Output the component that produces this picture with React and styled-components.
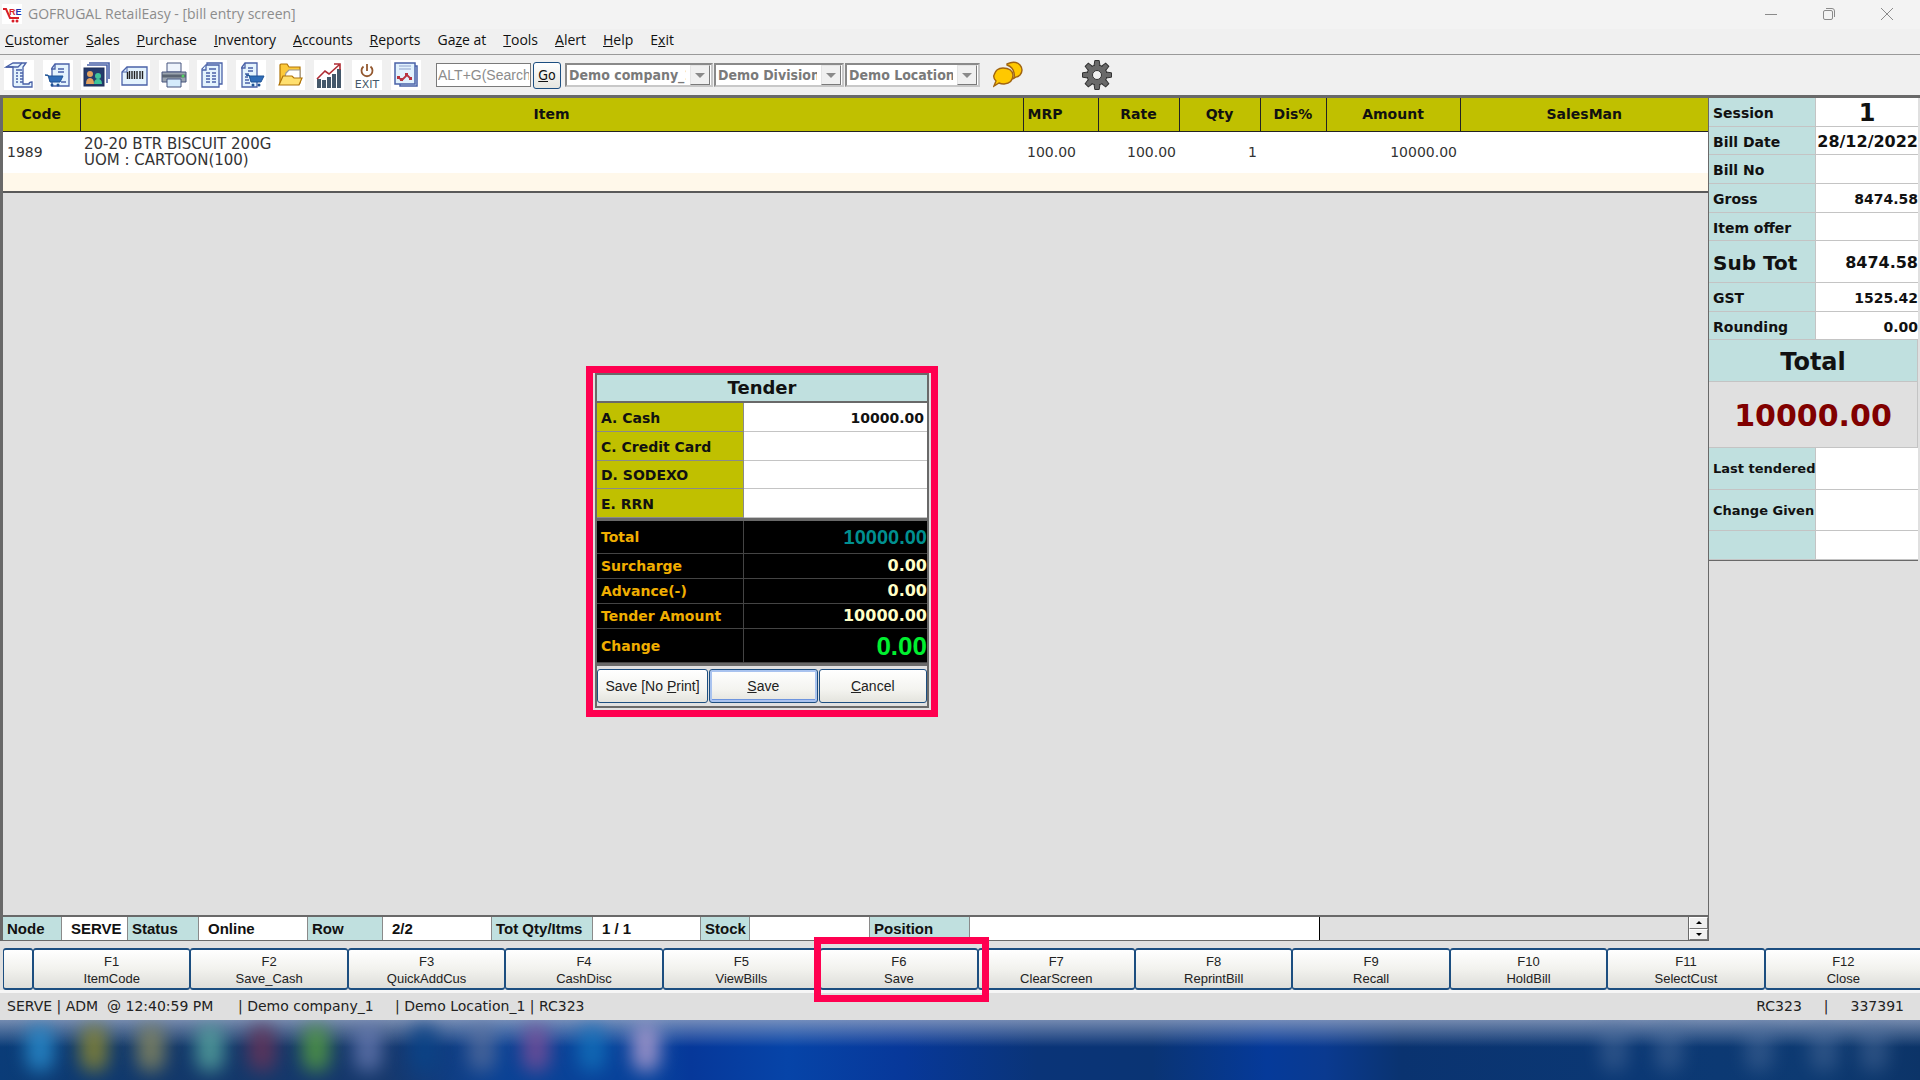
import React from 'react';
import styled, { createGlobalStyle, css } from 'styled-components';

const VERDANA = `Verdana, "DejaVu Sans", sans-serif`;
const TAHOMA = `Tahoma, "DejaVu Sans Condensed", "DejaVu Sans", sans-serif`;
const SEGOE = `"Segoe UI", "Open Sans", "Noto Sans", sans-serif`;
const SYSTEM = `"Microsoft Sans Serif", "Liberation Sans", sans-serif`;

const OLIVE = '#c0c000';
const TEAL = '#c0e0df';
const GREY = '#e0e0e0';
const DARK = '#696969';
const PINK = '#ff0050';
const NAVY = '#1c4e80';

const Global = createGlobalStyle`
  * { box-sizing: border-box; }
  html, body, #root { height: 100%; }
  body { margin: 0; background: ${GREY}; overflow: hidden; }
  button, input, select { margin: 0; font: inherit; }
`;

const Desktop = styled.div`
  display: flex;
  flex-direction: column;
  min-height: 100vh;
  font: 14px/16px ${VERDANA};
  color: #111;
`;

/* ---------- title bar ---------- */
const TitleBar = styled.header`
  display: flex;
  align-items: center;
  height: 29px;
  padding: 0 4px 1px 2px;
  background: #f3f3f3;
  font: 14px/20px ${SEGOE};
  color: #8c8c8c;
`;
const Title = styled.h1`
  flex: 1;
  margin: 0 0 0 6px;
  font: inherit;
`;
const Logo = styled.svg`
  width: 20px;
  height: 20px;
  background: #fff;
`;
const WindowButton = styled.button`
  display: grid;
  place-items: center;
  width: 58px;
  height: 28px;
  padding: 0;
  border: 0;
  background: none;
`;

/* ---------- menu ---------- */
const MenuBar = styled.nav`
  display: flex;
  align-items: center;
  gap: 17px;
  height: 25px;
  padding: 0 5px 3px;
  background: #f0f0f0;
  font: 14px/20px ${SEGOE};
`;
const MenuItem = styled.a`
  color: #111;
  text-decoration: none;
`;

/* ---------- toolbar ---------- */
const ToolBar = styled.div`
  display: flex;
  align-items: center;
  height: 41px;
  padding: 0 4px;
  border-top: 1px solid #9a9a9a;
  background: #f0f0f0;
`;
const IconGroup = styled.div`
  display: flex;
  justify-content: space-between;
  width: 417px;
  margin-right: 15px;
`;
const IconButton = styled.button`
  flex: none;
  width: 30px;
  height: 30px;
  padding: 0;
  border: 0;
  background: ${(p) => (p.$plain ? 'none' : '#fff')};
  margin-left: ${(p) => p.$space || 0}px;
  svg { display: block; width: 30px; height: 30px; }
`;
const SearchBox = styled.input`
  width: 95px;
  height: 24px;
  padding: 0 1px;
  border: 1px solid #7a7a7a;
  background: #fff;
  font: 14px/20px ${SYSTEM};
  &::placeholder { color: #8c8c8c; opacity: 1; }
`;
const GoButton = styled.button`
  width: 28px;
  height: 27px;
  margin: 0 4px 0 2px;
  padding: 0;
  border: 1px solid ${NAVY};
  border-radius: 3px;
  background: linear-gradient(#fff, #e6e6e0);
  font: 14px/20px ${TAHOMA};
  color: #111;
`;
const Combo = styled.label`
  display: flex;
  width: ${(p) => p.$width}px;
  height: 24px;
  margin-right: 1px;
  padding: 0 1px 0 0;
  border: 2px solid;
  border-color: #8a8a8a #c8c8c8 #c8c8c8 #8a8a8a;
  background: #fff;
`;
const ComboSelect = styled.select`
  flex: 1;
  min-width: 0;
  padding: 0 4px 0 2px;
  border: 0;
  appearance: none;
  background: #fff;
  font: bold 14px/20px ${TAHOMA};
  color: #7a7a7a;
  opacity: 1;
`;
const ComboArrow = styled.span`
  display: grid;
  place-items: center;
  flex: none;
  width: 20px;
  border: 1px solid;
  border-color: #e4e4e4 #7a7a7a #7a7a7a #e4e4e4;
  background: #f0f0f0;
`;

/* ---------- work area ---------- */
const Work = styled.main`
  display: flex;
  flex: 1;
  position: relative;
  border-top: 3px solid ${DARK};
  background: ${GREY};
  padding-right: 2px;
`;
const Left = styled.section`
  display: flex;
  flex: 1;
  flex-direction: column;
  border: solid ${DARK};
  border-width: 0 1px 0 3px;
`;
const BillTable = styled.table`
  width: 100%;
  border-collapse: collapse;
  table-layout: fixed;
  border-bottom: 2px solid #5a5a5a;
  background: #fff;
`;
const Col = styled.col`
  width: ${(p) => (p.$width ? `${p.$width}px` : 'auto')};
`;
const Th = styled.th`
  height: 33px;
  padding: 0 4px;
  border-right: 1px solid #222;
  border-bottom: 1px solid #222;
  background: ${OLIVE};
  font-size: 14px;
  text-align: ${(p) => (p.$left ? 'left' : 'center')};
  &:last-child { border-right: 0; }
`;
const Td = styled.td`
  height: 42px;
  padding: 0 3px 0 4px;
  font-size: ${(p) => (p.$name ? 15 : 14)}px;
  line-height: 16px;
  color: #333;
  text-align: ${(p) => (p.$right ? 'right' : 'left')};
`;
const EmptyRow = styled.td`
  height: 19px;
  padding: 0;
  background: #fff8ea;
`;

/* ---------- totals panel ---------- */
const Totals = styled.dl`
  display: grid;
  grid-template-columns: 107px 1fr;
  grid-template-rows: repeat(5, 29fr) 42fr repeat(2, 29fr) 42fr 67fr 42fr 42fr 29fr;
  flex: none;
  width: 209px;
  height: 463px;
  margin: 0;
  border-bottom: 1px solid ${DARK};
  font-weight: bold;
`;
const Label = styled.dt`
  display: flex;
  align-items: center;
  min-height: 0;
  padding: 2px 0 0 4px;
  border: solid #c4c4c4;
  border-width: 0 1px 1px 0;
  background: ${TEAL};
  font-size: ${(p) => p.$size || 14}px;
  line-height: 24px;
  white-space: nowrap;
`;
const Value = styled.dd`
  display: flex;
  align-items: center;
  justify-content: ${(p) => (p.$center ? 'center' : 'flex-end')};
  min-height: 0;
  min-width: 0;
  margin: 0;
  padding-top: 2px;
  border-bottom: 1px solid #c4c4c4;
  background: #fff;
  font-size: ${(p) => p.$size || 14}px;
`;
const GrandLabel = styled(Label)`
  grid-column: 1 / -1;
  justify-content: center;
  padding-left: 0;
`;
const GrandValue = styled(Value)`
  grid-column: 1 / -1;
  border-right: 1px solid #c4c4c4;
  background: ${GREY};
  color: #800000;
`;

/* ---------- tender dialog ---------- */
const Dialog = styled.section`
  position: absolute;
  top: 268px;
  left: 586px;
  width: 352px;
  padding: 0 2px 2px;
  border: 7px solid ${PINK};
  background: ${GREY};
`;
const DialogBody = styled.form`
  display: flex;
  flex-direction: column;
  border: 2px solid ${DARK};
`;
const DialogTitle = styled.h2`
  margin: 0;
  border-bottom: 2px solid ${DARK};
  background: ${TEAL};
  font-size: 18px;
  line-height: 26px;
  text-align: center;
`;
const Rows = styled.div`
  display: grid;
  grid-template-rows: ${(p) => p.$rows};
  height: ${(p) => p.$height}px;
  border-bottom: 3px solid ${DARK};
`;
const Line = styled.div`
  display: grid;
  grid-template-columns: 147px 1fr;
  min-height: 0;
`;
const PayLabel = styled.label`
  display: flex;
  align-items: center;
  padding: 2px 0 0 4px;
  border: solid #8a8a8a;
  border-width: 0 1px 1px 0;
  background: ${OLIVE};
  font-size: 14px;
  font-weight: bold;
`;
const PayInput = styled.input`
  min-width: 0;
  padding: 2px 3px 0 0;
  border: 0;
  border-bottom: 1px solid #c4c4c4;
  background: #fff;
  font: bold 14px/16px ${VERDANA};
  color: #111;
  text-align: right;
`;
const SumLabel = styled.label`
  display: flex;
  align-items: center;
  padding-left: 4px;
  border: solid #444;
  border-width: 0 1px 1px 0;
  background: #000;
  color: #f0ae00;
  font: bold 14px/16px ${VERDANA};
`;
const SumValue = styled.output`
  display: flex;
  align-items: center;
  justify-content: flex-end;
  border-bottom: 1px solid #444;
  background: #000;
  color: ${(p) => p.$color || '#ffffc8'};
  font-size: ${(p) => p.$size || 16}px;
  font-weight: bold;
  font-family: ${(p) => p.$family || VERDANA};
`;
const DialogActions = styled.div`
  display: grid;
  grid-template-columns: 111px 1fr 1fr;
  gap: 1px;
  padding: 3px 0;
`;
const XpButton = styled.button`
  height: 34px;
  padding: 0;
  border: 1px solid ${NAVY};
  border-radius: 3px;
  background: linear-gradient(#fff, #f4f4f0 60%, #e4e4de);
  font: 14px/16px ${SYSTEM};
  color: #222;
  ${(p) => p.$focus && css`box-shadow: inset 0 0 0 2px #a9c3ef, inset 0 -3px 0 #6d94de;`}
`;

/* ---------- bottom strip ---------- */
const InfoStrip = styled.div`
  display: flex;
  height: 26px;
  margin-top: auto;
  border: solid ${DARK};
  border-width: 2px 0 1px;
  font: bold 15px/20px ${SYSTEM};
`;
const InfoLabel = styled.span`
  display: flex;
  align-items: center;
  width: ${(p) => p.$width}px;
  padding: 1px 0 0 4px;
  border-right: 1px solid #8a8a8a;
  background: ${TEAL};
  white-space: nowrap;
`;
const InfoValue = styled.span`
  display: flex;
  align-items: center;
  width: ${(p) => p.$width}px;
  padding: 1px 0 0 9px;
  border-right: 1px solid ${(p) => (p.$end ? '#000' : '#8a8a8a')};
  background: #fff;
`;
const Spinner = styled.div`
  display: flex;
  flex-direction: column;
  width: 20px;
  margin-left: auto;
  border-left: 1px solid ${DARK};
`;
const SpinButton = styled.button`
  display: grid;
  place-items: center;
  flex: 1;
  min-height: 0;
  padding: 0;
  border: 1px solid;
  border-color: #fff #777 #777 #fff;
  background: #f0f0f0;
`;
const KeyBar = styled.div`
  display: flex;
  height: 52px;
  padding: 7px 0 0 3px;
  margin-right: -2px;
  border-bottom: 3px solid #f6f6f6;
`;
const KeyButton = styled.button`
  position: relative;
  flex: 1;
  height: 42px;
  padding: 2px 0 0;
  border: solid ${NAVY};
  border-width: 2px 1px;
  border-radius: 3px;
  background: linear-gradient(#fff, #f2f2ee 50%, #dededa);
  font: 13px/17px ${SYSTEM};
  color: #222;
  ${(p) => p.$blank && css`flex: 0 0 30px;`}
  ${(p) => p.$marked && css`
    z-index: 1;
    &::after {
      content: '';
      position: absolute;
      inset: -13px -12px -14px -7px;
      border: 7px solid ${PINK};
    }
  `}
`;
const KeyText = styled.span`
  display: block;
`;
const StatusBar = styled.footer`
  display: grid;
  grid-template-columns: 231px 157px 1fr auto;
  align-items: center;
  height: 27px;
  padding: 0 16px 1px 7px;
  background: #dfdfdf;
  font: 14px/16px ${VERDANA};
  color: #222;
  white-space: pre;
`;
const StatusRight = styled.span`
  display: flex;
  gap: 22px;
`;

/* ---------- task bar ---------- */
const TaskBar = styled.div`
  position: relative;
  height: 60px;
  overflow: hidden;
  background:
    linear-gradient(rgba(150, 165, 195, 0.75), rgba(150, 165, 195, 0) 45%),
    linear-gradient(90deg, #0a3c78, #12386a 8%, #16386c 20%, #0b4294 26%, #07429c 34%, #06389a 36%, #0644a8 41%,
      #07389a 47%, #0a3478 54%, #0a3474 60%, #053a9a 66%, #0a3a90 69%, #0a3370 73%, #0b3874 85%, #0d3a72 94%, #0c3468);
`;
const Blob = styled.span`
  position: absolute;
  top: 4px;
  width: 28px;
  height: 48px;
  border-radius: 14px;
  filter: blur(9px);
  opacity: ${(p) => p.$opacity || 0.8};
  background: ${(p) => p.$color};
`;

/* ---------- drawings ---------- */
const blue = '#4a62a8';
const page = '#e4f3fd';

const Cart = ({ x, y }) => (
  <g transform={`translate(${x} ${y})`}>
    <path d="M0 1h3l2 7h10l3-6H4z" fill="#2f6db8" stroke="#1f5496" />
    <circle cx="7" cy="11" r="1.5" fill="#1f5496" />
    <circle cx="13" cy="11" r="1.5" fill="#1f5496" />
  </g>
);

const icons = {
  Receipt: (
    <g fill={page} stroke={blue} strokeWidth="1.3">
      <path d="M9 3h13l-3 4v17h6q0-2 3-2v5H11q-2 0-2-2V7H2z" />
      <path d="M2 7h12l4-4" fill="none" />
      <path d="M12 10h6M12 13h2m2 0h3M12 16h2m2 0h3M12 19h2m2 0h3M12 22h2m2 0h3" />
    </g>
  ),
  'Sales cart': (
    <g>
      <path d="M12 4h14v22H9V8z" fill={page} stroke={blue} strokeWidth="1.3" />
      <path d="M12 4v5H8M15 9h6M15 12h6M18 22h5" fill="none" stroke={blue} strokeWidth="1.3" />
      <g transform="translate(2 14)"><Cart x={0} y={0} /></g>
    </g>
  ),
  Customers: (
    <g>
      <path d="M8 3h20v16M6 5h20v18" fill="none" stroke={blue} strokeWidth="1.6" />
      <rect x="3" y="8" width="20" height="18" fill="#243a6c" stroke="#1e2f58" />
      <circle cx="9" cy="14" r="3" fill="#e2a260" />
      <path d="M5 24q0-6 4-6t4 6z" fill="#e2a260" />
      <circle cx="17" cy="16" r="3" fill="#3fc49a" />
      <path d="M13 24q0-5 4-5t4 5z" fill="#3fc49a" />
    </g>
  ),
  Barcode: (
    <g>
      <path d="M7 7h20v18H2V12z" fill={page} stroke={blue} strokeWidth="1.3" />
      <path d="M7 7v5H2" fill="none" stroke={blue} />
      <path d="M7.500 12v7M9.500 11v8M12 11v8M14.500 11v8M17 11v8M20 11v8M22.500 11v8" stroke="#222" strokeWidth="1.4" />
    </g>
  ),
  Print: (
    <g stroke="#46557f">
      <path d="M8 3h14v9H8z" fill="#eef4fc" />
      <path d="M3 12h24v10H3z" fill="#9aa3ad" />
      <path d="M3 16h24" strokeWidth="3" stroke="#5a6472" />
      <path d="M8 19h14v8H8z" fill="#d4ebfb" />
      <circle cx="24" cy="16" r="1.500" fill="#4fd060" stroke="none" />
    </g>
  ),
  Report: (
    <g fill={page} stroke={blue} strokeWidth="1.3">
      <path d="M10 3h15v21H10z" />
      <path d="M9 5h13v22H5V9z" />
      <path d="M9 5v5H5M12 9h7M9 13h4m2 0h4M9 16h4m2 0h4M9 19h4m2 0h4M9 22h4m2 0h4" />
    </g>
  ),
  'Purchase cart': (
    <g>
      <path d="M9 3h12v24H6V7z" fill={page} stroke={blue} strokeWidth="1.3" />
      <path d="M9 3v5H5M12 8h5M12 11h5M9 14h4M9 17h3M9 20h4M9 23h5" fill="none" stroke={blue} strokeWidth="1.3" />
      <Cart x={10} y={14} />
    </g>
  ),
  Folder: (
    <g stroke="#b07408" strokeWidth="1.2">
      <path d="M5 24V5q0-1 1-1h6l2 3h11v16z" fill="#fcc93a" />
      <path d="M11 13l3-3h11v10H9z" fill="#fff" stroke="#9a9a9a" />
      <path d="M8 16h9l2 2h8l-3 7H4z" fill="#ffe070" />
    </g>
  ),
  Chart: (
    <g>
      <path d="M5 28v-9M10 28v-8M15 28V17M20 28V14M25 28V9" stroke="#44586a" strokeWidth="4" />
      <path d="M3 19l8-8 4 3 10-9M20 4h6v6" fill="none" stroke="#b02c34" strokeWidth="1.600" />
    </g>
  ),
  Exit: (
    <g>
      <path d="M11.500 6.500a5.500 5.500 0 1 0 7 0M15 4v7" fill="none" stroke="#93582f" strokeWidth="1.800" />
      <text x="15" y="28" textAnchor="middle" fontFamily="DejaVu Sans, sans-serif" fontSize="11" fill="#44586a">EXIT</text>
    </g>
  ),
  Analysis: (
    <g>
      <path d="M9 6h17v20H9z" fill={page} stroke={blue} strokeWidth="1.500" />
      <path d="M4 3h20v21H4z" fill="#e2f2fd" stroke={blue} strokeWidth="1.500" />
      <path d="M8 6h12M8 9h12" stroke="#8fa0cc" />
      <path d="M8 18l3 2 5-5 4 4" fill="none" stroke="#b83440" strokeWidth="1.800" />
      <path d="M6 16h3v3H6zM9 18h3v3H9zM14 13h3v3h-3zM18 17h3v3h-3z" fill="#b83440" />
    </g>
  ),
};

const Arrow = ({ up, size = 8, color = '#8a8a8a' }) => (
  <svg width={size} height={size / 2} viewBox="0 0 8 4" aria-hidden="true">
    <path d={up ? 'M0 4h8L4 0z' : 'M0 0h8L4 4z'} fill={color} />
  </svg>
);

const teeth = Array.from({ length: 8 }, (_, i) => i * 45);

/* Underlines the access key of a caption. */
const Access = ({ text, at = 0 }) => (
  <>
    {text.slice(0, at)}
    <u>{text[at]}</u>
    {text.slice(at + 1)}
  </>
);

/* ---------- data ---------- */
const menu = [
  ['Customer', 0], ['Sales', 0], ['Purchase', 0], ['Inventory', 0], ['Accounts', 0], ['Reports', 0],
  ['Gaze at', 2], ['Tools', 0], ['Alert', 0], ['Help', 0], ['Exit', 1],
];
const combos = [
  ['Company', 'Demo company_1', 148],
  ['Division', 'Demo Division_1', 130],
  ['Location', 'Demo Location_1', 135],
];
const columns = [
  ['Code', 77], ['Item'], ['MRP', 75, true], ['Rate', 81], ['Qty', 81], ['Dis%', 66], ['Amount', 134], ['SalesMan', 248],
];
const totals = [
  ['Session', '1', { size: 24, center: true }],
  ['Bill Date', '28/12/2022', { size: 16 }],
  ['Bill No', ''],
  ['Gross', '8474.58'],
  ['Item offer', ''],
  ['Sub Tot', '8474.58', { labelSize: 20, size: 16 }],
  ['GST', '1525.42'],
  ['Rounding', '0.00'],
];
const after = ['Last tendered', 'Change Given', ''];
const payments = [['A. Cash', '10000.00'], ['C. Credit Card', ''], ['D. SODEXO', ''], ['E. RRN', '']];
const sums = [
  ['Total', '10000.00', { size: 20, color: '#009090', family: SYSTEM }],
  ['Surcharge', '0.00'],
  ['Advance(-)', '0.00'],
  ['Tender Amount', '10000.00'],
  ['Change', '0.00', { size: 26, color: '#00f030', family: SYSTEM }],
];
const info = [
  ['Node', 59, 'SERVE', 66], ['Status', 71, 'Online', 109], ['Row', 75, '2/2', 109],
  ['Tot Qty/Itms', 101, '1 / 1', 108], ['Stock', 49, '', 120], ['Position', 100, '', 350],
];
const keys = ['ItemCode', 'Save_Cash', 'QuickAddCus', 'CashDisc', 'ViewBills', 'Save', 'ClearScreen', 'ReprintBill', 'Recall', 'HoldBill', 'SelectCust', 'Close'];
const blobs = [
  [26, '#2a8fd0'], [80, '#8f8a30'], [137, '#8a8a60'], [196, '#58a8a0'], [248, '#6a3458'], [302, '#56a040'],
  [354, '#6f80b8', 0.7], [410, '#0a4488'], [468, '#6878a0', 0.6], [522, '#8a5098', 0.7], [578, '#1478c0', 0.7],
  [632, '#b4a0d0'], [1600, '#5a78a4', 0.4], [1655, '#5a78a4', 0.4], [1745, '#5a78a4', 0.4], [1810, '#5a78a4', 0.4], [1860, '#5a78a4', 0.4],
];

export default function App() {
  return (
    <Desktop>
      <Global />
      <TitleBar>
        <Logo viewBox="0 0 20 20" aria-hidden="true">
          <path d="M1 5h3l4 9h9" fill="none" stroke="#d81e28" strokeWidth="2" />
          <text x="7" y="11" fontFamily="Liberation Sans, sans-serif" fontWeight="bold" fontSize="9" fill="#d81e28">
            R<tspan fill="#2030b0">E</tspan>
          </text>
          <circle cx="11" cy="17" r="1.500" fill="#d81e28" />
          <circle cx="15" cy="17" r="1.500" fill="#d81e28" />
        </Logo>
        <Title>GOFRUGAL RetailEasy - [bill entry screen]</Title>
        <WindowButton aria-label="Minimize">
          <svg width="12" height="12"><path d="M0 6.500h12" stroke="#8a8a8a" /></svg>
        </WindowButton>
        <WindowButton aria-label="Restore">
          <svg width="12" height="12" fill="none" stroke="#8a8a8a">
            <rect x="0.500" y="2.500" width="9" height="9" rx="1.500" />
            <path d="M3 .5h6q2.500 0 2.500 2.500v6" />
          </svg>
        </WindowButton>
        <WindowButton aria-label="Close">
          <svg width="12" height="12"><path d="M0 0l12 12M12 0L0 12" stroke="#8a8a8a" /></svg>
        </WindowButton>
      </TitleBar>

      <MenuBar>
        {menu.map(([text, at]) => (
          <MenuItem key={text} href="#"><Access text={text} at={at} /></MenuItem>
        ))}
      </MenuBar>

      <ToolBar>
        <IconGroup>
          {Object.entries(icons).map(([name, drawing]) => (
            <IconButton key={name} aria-label={name}>
              <svg viewBox="0 0 30 30" fill="none">{drawing}</svg>
            </IconButton>
          ))}
        </IconGroup>
        <SearchBox aria-label="Search" placeholder="ALT+G(Search" />
        <GoButton><Access text="Go" /></GoButton>
        {combos.map(([name, value, width]) => (
          <Combo key={name} $width={width}>
            <ComboSelect aria-label={name} disabled><option>{value}</option></ComboSelect>
            <ComboArrow><Arrow size={10} /></ComboArrow>
          </Combo>
        ))}
        <IconButton $plain $space={12} aria-label="Messages">
          <svg viewBox="0 0 30 30" fill="#ffc800" stroke="#a06410" strokeWidth="1.400">
            <path d="M14 4q8-4 13 1 4 5 0 10-2 2-4 2l-3 2q2-2 1-6-1-6-7-8z" />
            <path d="M10 8q9 0 10 7 0 8-9 9-3 0-5-1l-5 3 2-5q-3-3-2-6 2-7 9-7z" />
          </svg>
        </IconButton>
        <IconButton $plain $space={59} aria-label="Settings">
          <svg viewBox="0 0 30 30">
            <g fill="#6a6a6a" stroke="#333" strokeWidth="1">
              {teeth.map((a) => (
                <path key={a} d="M12 6l.8-5.500h4.400L18 6z" transform={`rotate(${a} 15 15)`} />
              ))}
              <circle cx="15" cy="15" r="10" />
            </g>
            {teeth.map((a) => (
              <path key={a} d="M12.700 7l.7-5h3.200l.7 5z" fill="#6a6a6a" transform={`rotate(${a} 15 15)`} />
            ))}
            <circle cx="15" cy="15" r="4.500" fill="#f0f0f0" stroke="#333" />
          </svg>
        </IconButton>
      </ToolBar>

      <Work>
        <Left>
          <BillTable>
            <colgroup>{columns.map(([name, width]) => <Col key={name} $width={width} />)}</colgroup>
            <thead>
              <tr>{columns.map(([name, , left]) => <Th key={name} $left={left}>{name}</Th>)}</tr>
            </thead>
            <tbody>
              <tr>
                <Td>1989</Td>
                <Td $name>20-20 BTR BISCUIT 200G<br />UOM : CARTOON(100)</Td>
                <Td>100.00</Td>
                <Td $right>100.00</Td>
                <Td $right>1</Td>
                <Td />
                <Td $right>10000.00</Td>
                <Td />
              </tr>
              <tr><EmptyRow colSpan={8} /></tr>
            </tbody>
          </BillTable>
          <InfoStrip>
            {info.map(([label, lw, value, vw]) => (
              <React.Fragment key={label}>
                <InfoLabel $width={lw}>{label}</InfoLabel>
                <InfoValue $width={vw} $end={label === 'Position'}>{value}</InfoValue>
              </React.Fragment>
            ))}
            <Spinner>
              <SpinButton aria-label="Scroll up"><Arrow up size={6} color="#000" /></SpinButton>
              <SpinButton aria-label="Scroll down"><Arrow size={6} color="#000" /></SpinButton>
            </Spinner>
          </InfoStrip>
        </Left>

        <Totals>
          {totals.map(([label, value, o = {}]) => (
            <React.Fragment key={label}>
              <Label $size={o.labelSize}>{label}</Label>
              <Value $size={o.size} $center={o.center}>{value}</Value>
            </React.Fragment>
          ))}
          <GrandLabel $size={24}>Total</GrandLabel>
          <GrandValue $size={30} $center>10000.00</GrandValue>
          {after.map((label) => (
            <React.Fragment key={label}>
              <Label $size={13}>{label}</Label>
              <Value />
            </React.Fragment>
          ))}
        </Totals>

        <Dialog role="dialog" aria-labelledby="tender-title">
          <DialogBody onSubmit={(e) => e.preventDefault()}>
            <DialogTitle id="tender-title">Tender</DialogTitle>
            <Rows $rows="repeat(4, 1fr)" $height={118}>
              {payments.map(([label, value]) => (
                <Line key={label}>
                  <PayLabel htmlFor={label}>{label}</PayLabel>
                  <PayInput id={label} defaultValue={value} />
                </Line>
              ))}
            </Rows>
            <Rows $rows="33fr 25fr 25fr 25fr 34fr" $height={145}>
              {sums.map(([label, value, o = {}]) => (
                <Line key={label}>
                  <SumLabel htmlFor={label}>{label}</SumLabel>
                  <SumValue id={label} $size={o.size} $color={o.color} $family={o.family}>{value}</SumValue>
                </Line>
              ))}
            </Rows>
            <DialogActions>
              <XpButton type="button"><Access text="Save [No Print]" at={9} /></XpButton>
              <XpButton type="submit" $focus><Access text="Save" /></XpButton>
              <XpButton type="button"><Access text="Cancel" /></XpButton>
            </DialogActions>
          </DialogBody>
        </Dialog>
      </Work>

      <KeyBar>
        <KeyButton $blank aria-label="Blank" />
        {keys.map((name, i) => (
          <KeyButton key={name} $marked={i === 5}>
            <KeyText>F{i + 1}</KeyText>
            <KeyText>{name}</KeyText>
          </KeyButton>
        ))}
      </KeyBar>
      <StatusBar>
        <span>{'SERVE | ADM  @ 12:40:59 PM'}</span>
        <span>| Demo company_1</span>
        <span>| Demo Location_1 | RC323</span>
        <StatusRight><span>RC323</span><span>|</span><span>337391</span></StatusRight>
      </StatusBar>
      <TaskBar aria-hidden="true">
        {blobs.map(([x, color, opacity]) => (
          <Blob key={x} $color={color} $opacity={opacity} style={{ left: `${x / 19.2}%` }} />
        ))}
      </TaskBar>
    </Desktop>
  );
}
